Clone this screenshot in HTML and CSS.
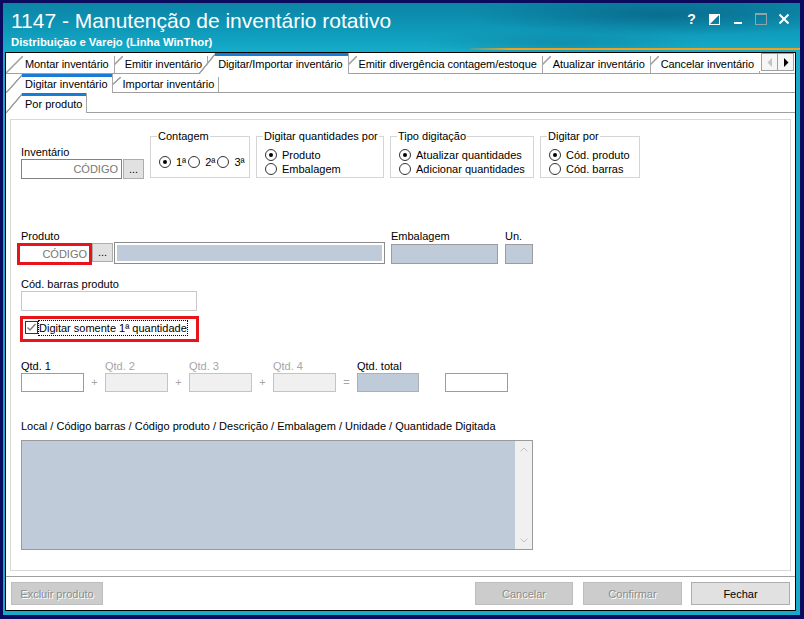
FILE: index.html
```html
<!DOCTYPE html>
<html lang="pt-BR">
<head>
    <meta charset="UTF-8">
    <title>1147 - Manutenção de inventário rotativo</title>
    <link rel="stylesheet" href="styles.css">
</head>
<body>
<div class="frame">
<div class="window">
    <div class="titlebar">
        <div class="title-top">
            <h1>1147 - Manutenção de inventário rotativo</h1>
            <div class="win-buttons">
                <span class="win-btn help">?</span>
                <span class="win-btn">
                    <svg width="11" height="11" viewBox="0 0 11 11"><rect x="0.5" y="0.5" width="10" height="10" fill="none" stroke="#fff"/><polygon points="0,0 11,0 0,11" fill="#fff"/></svg>
                </span>
                <span class="win-btn">
                    <svg width="12" height="12" viewBox="0 0 12 12"><rect x="2" y="9" width="8" height="2" fill="#fff"/></svg>
                </span>
                <span class="win-btn">
                    <svg width="12" height="12" viewBox="0 0 12 12"><rect x="0.5" y="0.5" width="11" height="11" fill="none" stroke="#8fa3ab"/><rect x="0" y="0" width="12" height="2" fill="#8fa3ab"/></svg>
                </span>
                <span class="win-btn">
                    <svg width="12" height="12" viewBox="0 0 12 12"><path d="M1.5 1.5 L10.5 10.5 M10.5 1.5 L1.5 10.5" stroke="#fff" stroke-width="2"/></svg>
                </span>
            </div>
        </div>
        <div class="title-sub">
            <span class="subtitle">Distribuição e Varejo (Linha WinThor)</span>
            <span class="accent"></span>
        </div>
    </div>

    <div class="client">
        <!-- abas principais -->
        <div class="tabrow tabrow-main">
            <div class="tabs">
                <div class="tab">Montar inventário</div>
                <div class="tab">Emitir inventário</div>
                <div class="tab active">Digitar/Importar inventário</div>
                <div class="tab">Emitir divergência contagem/estoque</div>
                <div class="tab">Atualizar inventário</div>
                <div class="tab">Cancelar inventário</div>
            </div>
            <div class="tab-scroll">
                <span class="scroll-btn"><svg width="8" height="9" viewBox="0 0 8 9"><polygon points="6,0 6,9 1.5,4.5" fill="#c4c4c4"/></svg></span>
                <span class="scroll-btn"><svg width="8" height="9" viewBox="0 0 8 9"><polygon points="2,0 6.5,4.5 2,9" fill="#000"/></svg></span>
            </div>
        </div>
        <div class="tabrow tabrow-sub">
            <div class="tab active">Digitar inventário</div>
            <div class="tab">Importar inventário</div>
        </div>
        <div class="tabrow tabrow-page">
            <div class="tab active">Por produto</div>
        </div>

        <div class="panel">
            <div class="row-top">
                <div class="field inv-field">
                    <label>Inventário</label>
                    <div class="input-line">
                        <input class="code" placeholder="CÓDIGO">
                        <button class="dots">...</button>
                    </div>
                </div>
                <fieldset class="group g-contagem">
                    <legend>Contagem</legend>
                    <div class="inline-opts">
                        <span class="opt"><span class="radio on"></span>1ª</span>
                        <span class="opt"><span class="radio"></span>2ª</span>
                        <span class="opt"><span class="radio"></span>3ª</span>
                    </div>
                </fieldset>
                <fieldset class="group g-qtd">
                    <legend>Digitar quantidades por</legend>
                    <span class="opt"><span class="radio on"></span>Produto</span>
                    <span class="opt"><span class="radio"></span>Embalagem</span>
                </fieldset>
                <fieldset class="group g-tipo">
                    <legend>Tipo digitação</legend>
                    <span class="opt"><span class="radio on"></span>Atualizar quantidades</span>
                    <span class="opt"><span class="radio"></span>Adicionar quantidades</span>
                </fieldset>
                <fieldset class="group g-por">
                    <legend>Digitar por</legend>
                    <span class="opt"><span class="radio on"></span>Cód. produto</span>
                    <span class="opt"><span class="radio"></span>Cód. barras</span>
                </fieldset>
            </div>

            <div class="row-prod">
                <div class="field">
                    <label>Produto</label>
                    <div class="input-line prod-line">
                        <input class="code code-prod" placeholder="CÓDIGO">
                        <button class="dots dots-prod">...</button>
                        <div class="desc-box"></div>
                    </div>
                </div>
                <div class="field emb-field">
                    <label>Embalagem</label>
                    <div class="ro-box emb-box"></div>
                </div>
                <div class="field un-field">
                    <label>Un.</label>
                    <div class="ro-box un-box"></div>
                </div>
            </div>

            <div class="field barcode-field">
                <label>Cód. barras produto</label>
                <input class="barcode">
            </div>

            <div class="check-row">
                <div class="check-highlight">
                    <span class="checkbox">
                        <svg width="11" height="11" viewBox="0 0 11 11"><polyline points="1.5,5.5 4,8 9.5,2" fill="none" stroke="#7a7a7a" stroke-width="1.4"/></svg>
                    </span>
                    <span class="focus-label">Digitar somente 1ª quantidade</span>
                </div>
            </div>

            <div class="qty-row">
                <div class="qty-col">
                    <label>Qtd. 1</label>
                    <input class="qty">
                </div>
                <span class="op">+</span>
                <div class="qty-col off">
                    <label>Qtd. 2</label>
                    <input class="qty" disabled>
                </div>
                <span class="op">+</span>
                <div class="qty-col off">
                    <label>Qtd. 3</label>
                    <input class="qty" disabled>
                </div>
                <span class="op">+</span>
                <div class="qty-col off">
                    <label>Qtd. 4</label>
                    <input class="qty" disabled>
                </div>
                <span class="op">=</span>
                <div class="qty-col total">
                    <label>Qtd. total</label>
                    <div class="ro-box qty-total"></div>
                </div>
                <div class="qty-col extra">
                    <input class="qty">
                </div>
            </div>

            <div class="field list-field">
                <label>Local / Código barras / Código produto / Descrição / Embalagem / Unidade / Quantidade Digitada</label>
                <div class="listbox">
                    <div class="list-area"></div>
                    <div class="vscroll">
                        <svg width="8" height="5" viewBox="0 0 8 5"><polyline points="0.5,4.5 4,1 7.5,4.5" fill="none" stroke="#c2c2c2"/></svg>
                        <svg width="8" height="5" viewBox="0 0 8 5"><polyline points="0.5,0.5 4,4 7.5,0.5" fill="none" stroke="#c2c2c2"/></svg>
                    </div>
                </div>
            </div>
        </div>

        <div class="buttonbar">
            <button class="btn btn-off btn-excluir" disabled>Excluir produto</button>
            <span class="spacer"></span>
            <button class="btn btn-off btn-cancelar" disabled>Cancelar</button>
            <button class="btn btn-off btn-confirmar" disabled>Confirmar</button>
            <button class="btn btn-fechar">Fechar</button>
        </div>
    </div>
</div>
</div>
</body>
</html>
```

FILE: styles.css
```css
* {
    box-sizing: border-box;
}

html, body {
    margin: 0;
}

body {
    width: 804px;
    height: 619px;
    overflow: hidden;
    font-family: "Liberation Sans", Arial, sans-serif;
    font-size: 11px;
    color: #000;
    background: #0a0b5f;
}

.frame {
    height: 619px;
    padding: 3px 4px 4px 3px;
    display: flex;
}

.window {
    flex: 1;
    min-width: 0;
    display: flex;
    flex-direction: column;
    background: #18aac7;
}

/* barra de titulo */
.titlebar {
    height: 49px;
    flex-shrink: 0;
    padding: 6px 0 0 8px;
    color: #fff;
    background:
        radial-gradient(ellipse 280px 30px at 660px 12px, rgba(5, 70, 105, 0.45), rgba(5, 70, 105, 0) 70%),
        radial-gradient(ellipse 200px 22px at 560px 40px, rgba(5, 80, 110, 0.25), rgba(5, 80, 110, 0) 70%),
        linear-gradient(180deg, #0b84a5 0%, #0f99b9 55%, #15adca 100%);
}

.title-top {
    display: flex;
    align-items: flex-start;
}

.titlebar h1 {
    margin: 0;
    font-size: 21px;
    line-height: 24px;
    font-weight: normal;
}

.win-buttons {
    display: flex;
    margin: 4px 5px 0 auto;
}

.win-btn {
    width: 23px;
    height: 12px;
    display: flex;
    align-items: center;
    justify-content: center;
}

.help {
    font-weight: bold;
    font-size: 14px;
    line-height: 12px;
}

.title-sub {
    display: flex;
    height: 13px;
    margin-top: 3px;
}

.subtitle {
    font-weight: bold;
    font-size: 11.3px;
    line-height: 13px;
}

.accent {
    margin-left: auto;
    margin-bottom: -1px;
    align-self: flex-end;
    width: 330px;
    height: 2px;
    background: linear-gradient(90deg, rgba(242, 161, 31, 0.2), #f2a11f 12%);
}

/* area cliente */
.client {
    flex: 1;
    min-width: 0;
    margin: 0 4px 4px 2px;
    border: 1px solid #000;
    background: #fff;
    display: flex;
    flex-direction: column;
}

/* abas */
.tabrow {
    display: flex;
    align-items: flex-end;
    flex-shrink: 0;
    border-bottom: 1px solid #a0a0a0;
}

.tabrow-main {
    height: 21px;
}

.tabrow-sub {
    height: 19px;
}

.tabrow-page {
    height: 20px;
}

.tabs {
    flex: 1 1 0;
    min-width: 0;
    display: flex;
    align-items: flex-end;
    align-self: stretch;
}

.tab {
    position: relative;
    flex-shrink: 0;
    white-space: nowrap;
    line-height: 13px;
    padding: 2px 4px 2px 19px;
    margin-left: -9px;
    border-right: 1px solid #a8a8a8;
    background:
        linear-gradient(to bottom right, transparent calc(50% - 1px), #a0a0a0 calc(50% - 0.5px), #a0a0a0 calc(50% + 0.5px), #fff calc(50% + 1px)) 0 0 / 17px 100% no-repeat,
        linear-gradient(#fff, #fff) 17px 0 / 100% 100% no-repeat;
}

.tab:first-child {
    margin-left: 0;
}

.tab:nth-child(1) { z-index: 6; }
.tab:nth-child(2) { z-index: 5; }
.tab:nth-child(3) { z-index: 4; }
.tab:nth-child(4) { z-index: 3; }
.tab:nth-child(5) { z-index: 2; }
.tab:nth-child(6) { z-index: 1; }

.tab.active {
    z-index: 10;
    padding-top: 5px;
    padding-bottom: 3px;
    margin-bottom: -1px;
    background:
        linear-gradient(#1a7bd6, #1a7bd6) 16px 0 / calc(100% - 16px) 3px no-repeat,
        linear-gradient(to bottom right, transparent calc(50% - 1px), #a0a0a0 calc(50% - 0.5px), #a0a0a0 calc(50% + 0.5px), #fff calc(50% + 1px)) 0 0 / 17px 100% no-repeat,
        linear-gradient(#fff, #fff) 17px 0 / 100% 100% no-repeat;
}

.tabrow-main .tab {
    letter-spacing: -0.08px;
    padding-right: 5px;
}

.tabrow-sub .tab {
    padding-top: 1px;
    padding-bottom: 1px;
}

.tabrow-sub .tab.active {
    padding-top: 4px;
    padding-bottom: 2px;
}

.tabrow-page .tab.active {
    padding-top: 5px;
    padding-bottom: 2px;
}

.tab-scroll {
    position: relative;
    z-index: 20;
    flex-shrink: 0;
    display: flex;
    align-self: flex-start;
    margin-right: 1px;
    padding-left: 2px;
    background: #fff;
}

.scroll-btn {
    width: 17px;
    height: 18px;
    border: 1px solid #a0a0a0;
    background: #f6f6f6;
    display: flex;
    align-items: center;
    justify-content: center;
}

.scroll-btn + .scroll-btn {
    margin-left: -1px;
}

/* painel do formulario */
.panel {
    flex: 1;
    margin: 6px 4px 5px;
    border: 1px solid #d8d8d8;
    padding: 10px 10px 0 10px;
}

.field label {
    display: block;
    line-height: 13px;
}

.input-line {
    display: flex;
    align-items: flex-start;
}

input {
    font: inherit;
    margin: 0;
    padding: 0;
    outline: none;
}

.code {
    width: 101px;
    height: 20px;
    border: 1px solid #828282;
    padding-right: 3px;
    text-align: right;
    background: #fff;
}

.code::placeholder {
    color: #767676;
    opacity: 1;
}

.dots {
    width: 21px;
    height: 20px;
    margin-left: 1px;
    padding: 0;
    font: inherit;
    line-height: 18px;
    background: #e1e1e1;
    border: 1px solid #adadad;
    color: #000;
}

.row-top {
    display: flex;
    align-items: flex-start;
}

.inv-field {
    margin-top: 16px;
}

.group {
    margin: 0 0 0 6px;
    min-width: 0;
    padding: 5px 4px 1px 8px;
    border: 1px solid #d5d5d5;
}

.group legend {
    padding: 0 1px;
    margin-left: -2px;
    line-height: 13px;
}

.g-contagem {
    width: 100px;
    padding-top: 12px;
    padding-bottom: 8px;
}

.g-qtd {
    width: 128px;
}

.g-tipo {
    width: 144px;
}

.g-por {
    width: 100px;
}

.inline-opts {
    display: flex;
}

.opt {
    display: flex;
    align-items: center;
    height: 14px;
    white-space: nowrap;
}

.inline-opts .opt {
    margin-right: 2px;
}

.radio {
    width: 12px;
    height: 12px;
    margin-right: 5px;
    border: 1px solid #333;
    border-radius: 50%;
    background: #fff;
    display: flex;
    align-items: center;
    justify-content: center;
}

.radio.on::after {
    content: "";
    width: 4px;
    height: 4px;
    border-radius: 50%;
    background: #000;
}

/* produto */
.row-prod {
    display: flex;
    align-items: flex-start;
    margin-top: 51px;
}

.prod-line {
    margin-top: -1px;
}

.code-prod {
    width: 75px;
    height: 22px;
    margin: 1px 0 0 -4px;
    border: 3px solid #e8141b;
    padding-right: 2px;
}

.dots-prod {
    height: 19px;
    margin: 1px 0 0 0;
    line-height: 17px;
}

.desc-box {
    width: 271px;
    height: 22px;
    margin-left: 1px;
    padding: 2px;
    border: 1px solid #8c8c8c;
    background: #bfcbd9;
    background-clip: content-box;
}

.ro-box {
    height: 20px;
    border: 1px solid #9c9c9c;
    background: #bfcbd9;
}

.emb-field {
    margin-left: 6px;
}

.emb-box {
    width: 107px;
    margin-top: 1px;
}

.un-field {
    margin-left: 7px;
}

.un-box {
    width: 28px;
    margin-top: 1px;
}

.barcode-field {
    margin-top: 13px;
}

.barcode {
    display: block;
    width: 176px;
    height: 20px;
    border: 1px solid #c8c8c8;
}

/* opcao destacada */
.check-row {
    margin-top: 5px;
}

.check-highlight {
    display: inline-flex;
    align-items: flex-start;
    width: 179px;
    height: 26px;
    margin-left: -1px;
    padding-left: 2px;
    border: 3px solid #e8141b;
}

.checkbox {
    width: 13px;
    height: 13px;
    margin-top: 2px;
    border: 1px solid #333;
    background: #fff;
    display: flex;
    align-items: center;
    justify-content: center;
}

.focus-label {
    margin-top: 1px;
    line-height: 14px;
    border: 1px dotted #000;
    white-space: nowrap;
}

/* quantidades */
.qty-row {
    display: flex;
    align-items: flex-end;
    margin-top: 18px;
}

.qty-col {
    width: 63px;
}

.qty-col label {
    display: block;
    line-height: 13px;
}

.qty-col.off label {
    color: #a6a6a6;
}

.qty {
    display: block;
    width: 63px;
    height: 19px;
    border: 1px solid #9c9c9c;
    background: #fff;
}

.qty:disabled {
    background: #f0f0f0;
    border-color: #c4c4c4;
}

.op {
    width: 21px;
    text-align: center;
    line-height: 19px;
    color: #a6a6a6;
}

.qty-total {
    width: 62px;
    height: 19px;
    border-color: #b0b0b0;
}

.qty-col.extra {
    margin-left: 25px;
}

/* lista */
.list-field {
    margin-top: 28px;
}

.list-field label {
    margin-bottom: 7px;
}

.listbox {
    display: flex;
    width: 512px;
    height: 110px;
    border: 1px solid #9a9a9a;
}

.list-area {
    flex: 1;
    background: #bfcbd9;
}

.vscroll {
    width: 17px;
    padding: 6px 0;
    background: #f0f0f0;
    display: flex;
    flex-direction: column;
    justify-content: space-between;
    align-items: center;
}

/* botoes */
.buttonbar {
    display: flex;
    flex-shrink: 0;
    border-top: 1px solid #a0a0a0;
    padding: 5px 5px;
}

.spacer {
    flex: 1;
}

.btn {
    height: 23px;
    padding: 0;
    font: inherit;
    cursor: pointer;
}

.btn-off {
    background: #cccccc;
    border: 1px solid #bdbdbd;
    color: #8d8d8d;
    text-shadow: 1px 1px 0 #fff;
}

.btn-excluir {
    width: 92px;
}

.btn-cancelar {
    width: 98px;
}

.btn-confirmar {
    width: 99px;
    margin-left: 10px;
}

.btn-fechar {
    width: 99px;
    margin-left: 9px;
    background: #e1e1e1;
    border: 1px solid #adadad;
    color: #000;
}
```
